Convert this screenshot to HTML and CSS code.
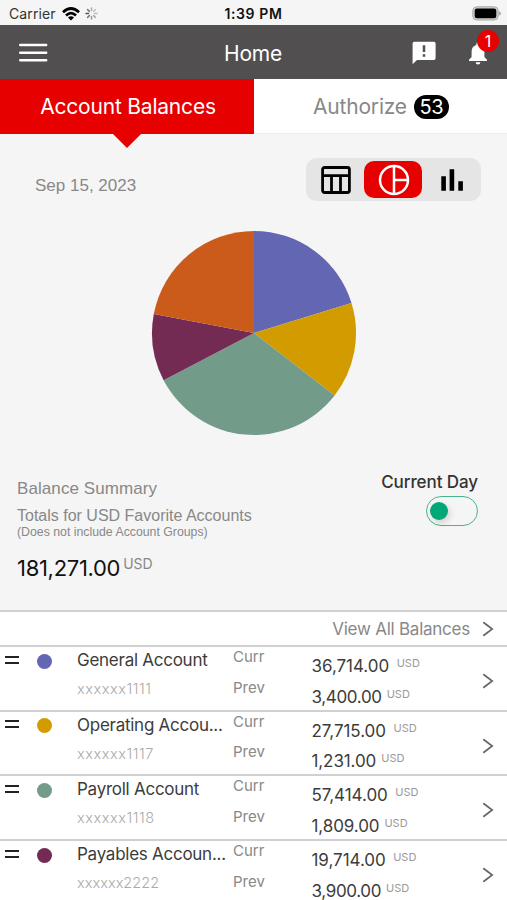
FILE: index.html
```html
<!DOCTYPE html>
<html lang="en">
<head>
<meta charset="utf-8">
<title>Home</title>
<link rel="stylesheet" href="styles.css">
</head>
<body>
<div class="status">
  <div class="carrier"><span class="carrier-name">Carrier</span>
    <svg width="18" height="14" viewBox="0 0 18 14"><g fill="none" stroke="#000" stroke-width="2.7"><path d="M1 5.2Q9-2.2 17 5.2"/><path d="M4 8.5Q9 3.8 14 8.5"/></g><path d="M6 10.6Q9 8 12 10.6L9 13.6Z"/></svg>
    <svg class="spinner" width="13" height="13" viewBox="-6.5 -6.5 13 13"><g stroke-width="1.5" stroke-linecap="round"><path d="M0-3V-5.5" stroke="#aaa"/><path d="M2.1-2.1L3.9-3.9" stroke="#c4c4c4"/><path d="M3 0H5.5" stroke="#bbb"/><path d="M2.1 2.1L3.9 3.9" stroke="#aaa"/><path d="M0 3V5.5" stroke="#999"/><path d="M-2.1 2.1L-3.9 3.9" stroke="#777"/><path d="M-3 0H-5.5" stroke="#555"/><path d="M-2.1-2.1L-3.9-3.9" stroke="#777"/></g></svg>
  </div>
  <div class="time">1:39 PM</div>
  <svg class="battery" width="30" height="15" viewBox="0 0 30 15"><rect x=".8" y=".8" width="25.4" height="13.2" rx="4" fill="#d0d0d0" stroke="#a8a8a8"/><rect x="2.7" y="2.6" width="21.6" height="9.6" rx="2.2"/><path d="M27.2 5Q30.4 7.4 27.2 9.8Z" fill="#999"/></svg>
</div>
<header class="header">
  <svg class="menu" width="30" height="20" viewBox="0 0 30 20"><path d="M2.2 2H28.2M2.2 9.7H28.2M2.2 17.3H28.2" stroke="#fff" stroke-width="2.4" stroke-linecap="round"/></svg>
  <h1 class="title">Home</h1>
  <div class="actions">
    <svg width="24" height="24" viewBox="0 0 24 24"><path fill="#fff" d="M2.2.8H21.8Q23.6.8 23.6 2.6V17Q23.6 18.9 21.8 18.9H5L.6 23.3V2.6Q.6.8 2.2.8Z"/><path d="M12 4.3V11M12 13.3V15.8" stroke="#514f50" stroke-width="2.5"/></svg>
    <div class="bell">
      <svg width="20" height="24" viewBox="0 0 20 24"><path fill="#fff" d="M10 1.2Q11.7 1.2 11.7 3V4Q16.4 5.3 16.4 10.6V16L19 18.7V20H1V18.7L3.6 16V10.6Q3.6 5.3 8.3 4V3Q8.3 1.2 10 1.2ZM7.6 21.2H12.4Q12.2 23.5 10 23.5T7.6 21.2Z"/></svg>
      <span class="alert">1</span>
    </div>
  </div>
</header>
<nav class="tabs">
  <div class="tab active"><span class="tab-text">Account Balances</span></div>
  <div class="tab"><span class="tab-text auth">Authorize</span><span class="count">53</span></div>
</nav>
<main class="summary">
  <div class="toolbar">
    <span class="date">Sep 15, 2023</span>
    <div class="views">
      <div class="view"><svg width="30" height="28" viewBox="0 0 30 28"><g fill="none" stroke="#000" stroke-width="2.8"><rect x="1.6" y="1.5" width="26.8" height="25" rx="2"/><path d="M2 9.6H28M10.5 9.6V26M19.5 9.6V26"/></g></svg></div>
      <div class="view selected"><svg width="32" height="32" viewBox="0 0 32 32"><g fill="none" stroke="#fff" stroke-width="2.5"><circle cx="16" cy="16" r="14"/><path d="M16 2V30M16 16H30"/></g></svg></div>
      <div class="view"><svg width="24" height="24" viewBox="0 0 24 24"><path d="M1.3 8.3H5.9V22.8H1.3ZM9.6 1.3H14.2V22.8H9.6ZM18.3 13.2H22.9V22.8H18.3Z"/></svg></div>
    </div>
  </div>
  <svg class="pie" width="206" height="206" viewBox="-103 -103 206 206">
    <path fill="#6366b2" d="M0 0V-102A102 102 0 0 1 97.5-30Z"/>
    <path fill="#d29c00" d="M0 0L97.5-30A102 102 0 0 1 80.6 62.5Z"/>
    <path fill="#739b89" d="M0 0L80.6 62.5A102 102 0 0 1-90.4 47.2Z"/>
    <path fill="#732a53" d="M0 0L-90.4 47.2A102 102 0 0 1-100.2-19Z"/>
    <path fill="#ca5b1a" d="M0 0L-100.2-19A102 102 0 0 1 0-102Z"/>
  </svg>
  <div class="totals">
    <div>
      <div class="heading">Balance Summary</div>
      <div class="scope">Totals for USD Favorite Accounts</div>
      <div class="note">(Does not include Account Groups)</div>
      <div class="sum"><span class="sum-value">181,271.00</span><span class="sum-unit">USD</span></div>
    </div>
    <div class="day">
      <span class="day-text">Current Day</span>
      <div class="toggle"><div class="knob"></div></div>
    </div>
  </div>
</main>
<div class="all"><span class="all-text">View All Balances</span><svg class="chev" width="12" height="16" viewBox="0 0 12 16"><path d="M1.3 1.2L10.2 8L1.3 14.8"/></svg></div>
<section class="accounts">
  <article class="row">
    <div class="handle"></div><div class="dot blue"></div>
    <div class="info"><div class="name">General Account</div><div class="mask">xxxxxx1111</div></div>
    <div class="labels"><div>Curr</div><div>Prev</div></div>
    <div class="amounts"><div class="first"><span>36,714.00</span><small>USD</small></div><div><span>3,400.00</span><small>USD</small></div></div>
    <svg class="chev" width="12" height="16" viewBox="0 0 12 16"><path d="M1.3 1.2L10.2 8L1.3 14.8"/></svg>
  </article>
  <article class="row">
    <div class="handle"></div><div class="dot gold"></div>
    <div class="info"><div class="name">Operating Accou...</div><div class="mask">xxxxxx1117</div></div>
    <div class="labels"><div>Curr</div><div>Prev</div></div>
    <div class="amounts"><div class="first"><span>27,715.00</span><small>USD</small></div><div><span class="ones">1,231.00</span><small>USD</small></div></div>
    <svg class="chev" width="12" height="16" viewBox="0 0 12 16"><path d="M1.3 1.2L10.2 8L1.3 14.8"/></svg>
  </article>
  <article class="row">
    <div class="handle"></div><div class="dot teal"></div>
    <div class="info"><div class="name">Payroll Account</div><div class="mask">xxxxxx1118</div></div>
    <div class="labels"><div>Curr</div><div>Prev</div></div>
    <div class="amounts"><div class="first"><span>57,414.00</span><small>USD</small></div><div><span class="ones">1,809.00</span><small>USD</small></div></div>
    <svg class="chev" width="12" height="16" viewBox="0 0 12 16"><path d="M1.3 1.2L10.2 8L1.3 14.8"/></svg>
  </article>
  <article class="row">
    <div class="handle"></div><div class="dot plum"></div>
    <div class="info"><div class="name">Payables Accoun...</div><div class="mask wide">xxxxxx2222</div></div>
    <div class="labels"><div>Curr</div><div>Prev</div></div>
    <div class="amounts"><div class="first"><span>19,714.00</span><small>USD</small></div><div><span>3,900.00</span><small>USD</small></div></div>
    <svg class="chev" width="12" height="16" viewBox="0 0 12 16"><path d="M1.3 1.2L10.2 8L1.3 14.8"/></svg>
  </article>
</section>
</body>
</html>
```
FILE: styles.css
```css
* { box-sizing: border-box; }
html, body { height: 900px; overflow: hidden; }
body { margin: 0; font-family: Inter, "Liberation Sans", sans-serif; background: #fff; color: #3c3c3c; white-space: nowrap; }
svg { display: block; flex: none; }

.status { height: 25px; background: #f5f5f5; display: grid; grid-template-columns: 1fr auto 1fr; align-items: center; padding: 2px 5px 0 9px; color: #111; }
.carrier { display: flex; align-items: center; }
.carrier-name { font-size: 14px; letter-spacing: .1px; width: 53px; color: #333; }
.spinner { margin-left: 5px; }
.time { font-size: 14px; font-weight: 600; letter-spacing: .6px; margin-right: 4px; }
.battery { justify-self: end; }

.header { height: 54px; background: #514f50; display: grid; grid-template-columns: 1fr auto 1fr; align-items: center; padding: 1px 19px 0 18px; }
.title { margin: 0; color: #fff; font-weight: 400; font-size: 21px; letter-spacing: -.2px; padding-top: 1px; }
.actions { display: flex; justify-content: flex-end; gap: 32px; }
.bell { position: relative; }
.alert { position: absolute; left: 9px; top: -11px; width: 22px; height: 22px; border-radius: 50%; background: #e60000; color: #fff; font-size: 16px; line-height: 23px; text-align: center; }

.tabs { height: 55px; display: grid; grid-template-columns: 254px 1fr; border-bottom: 1px solid #eee; }
.tab { display: flex; align-items: center; justify-content: center; font-size: 21px; color: #888; position: relative; height: 54px; padding: 1px 0 0 1px; }
.tab.active { background: #e60000; color: #fff; height: 54.5px; padding-left: 2px; }
.tab.active::after { content: ""; position: absolute; top: 100%; left: 113px; border: 14px solid transparent; border-top-color: #e60000; border-bottom: 0; }
.tab-text { letter-spacing: -.2px; }
.count { background: #000; color: #fff; border-radius: 12px; width: 35px; height: 24px; line-height: 24px; font-size: 20px; letter-spacing: -.3px; text-align: center; margin-left: 7px; }

.summary { height: 476px; background: #f5f5f5; padding-top: 24px; }
.toolbar { height: 43px; display: flex; justify-content: space-between; padding: 0 26px 0 35px; }
.date { font: 17px/55px "Liberation Sans", sans-serif; color: #888; }
.views { width: 175px; height: 43px; border-radius: 11px; background: #e5e5e5; display: grid; grid-template-columns: 58px 58px 58px; padding: 3px 1px 3px 0; }
.view { display: flex; align-items: center; justify-content: center; padding-left: 2px; }
.selected { background: #e60000; border-radius: 10px; }
.pie { margin: 28.5px auto 0; position: relative; }
.totals { display: flex; justify-content: space-between; padding: 36.5px 29px 0 17px; color: #888; }
.heading { font: 17px/32px "Liberation Sans", sans-serif; letter-spacing: .08px; padding-top: 1px; }
.scope { font: 16px/22px "Liberation Sans", sans-serif; }
.note { font: 12.3px/11px "Liberation Sans", sans-serif; }
.sum { display: flex; margin-top: 15px; }
.sum-value { color: #111; font-size: 22px; line-height: 30px; letter-spacing: -.3px; }
.sum-unit { font-size: 14px; line-height: 22px; margin-left: 3px; }
.day { display: flex; flex-direction: column; align-items: flex-end; }
.day-text { color: #333; font-size: 17px; font-weight: 500; line-height: 20px; margin-bottom: 4px; letter-spacing: -.08px; }
.toggle { width: 52px; height: 30px; border: 1.5px solid #49b38c; border-radius: 15px; padding: 5px 3px; }
.knob { width: 18px; height: 18px; border-radius: 50%; background: #00a878; box-shadow: 2px 3px 6px rgba(0,0,0,.15); }

.all { height: 37px; border-top: 2px solid #d0d0d0; border-bottom: 2px solid #d0d0d0; display: flex; align-items: center; justify-content: flex-end; padding: 1px 13px 0 0; color: #888; }
.all-text { font-size: 17px; margin-right: 12px; letter-spacing: -.24px; }
.chev { fill: none; stroke: #666; stroke-width: 1.7; }
.row { height: 64.7px; border-bottom: 2px solid #d0d0d0; display: grid; grid-template-columns: 37px 40px 156px 78.5px 170.5px 12px; }
.row:last-child { border: 0; }
.handle { width: 14px; height: 8px; margin: 8.5px 0 0 5px; border: solid #222; border-width: 2.5px 0; }
.dot { width: 15px; height: 15px; border-radius: 50%; margin-top: 6.5px; }
.blue { background: #6366b2; }
.gold { background: #d29c00; }
.teal { background: #739b89; }
.plum { background: #732a53; }
.name { font-size: 17px; line-height: 24px; letter-spacing: -.26px; margin-top: 1px; }
.mask { font-size: 14.5px; line-height: 20px; margin-top: 7px; color: #aaa; font-weight: 300; letter-spacing: .55px; }
.mask.wide { letter-spacing: .03px; }
.labels { font-size: 15px; line-height: 30.5px; margin-top: -5px; color: #888; }
.amounts { font-size: 17px; line-height: 30.5px; margin-top: 4px; }
.amounts div { display: flex; }
.amounts span { letter-spacing: -.35px; }
.amounts .first span { letter-spacing: -.04px; }
.amounts .ones { letter-spacing: -.1px; }
.amounts small { font-size: 11px; line-height: 24px; color: #999; margin-left: 5px; }
.amounts .first small { margin-left: 7.5px; }
.row .chev { align-self: center; margin-top: 3px; }
```
